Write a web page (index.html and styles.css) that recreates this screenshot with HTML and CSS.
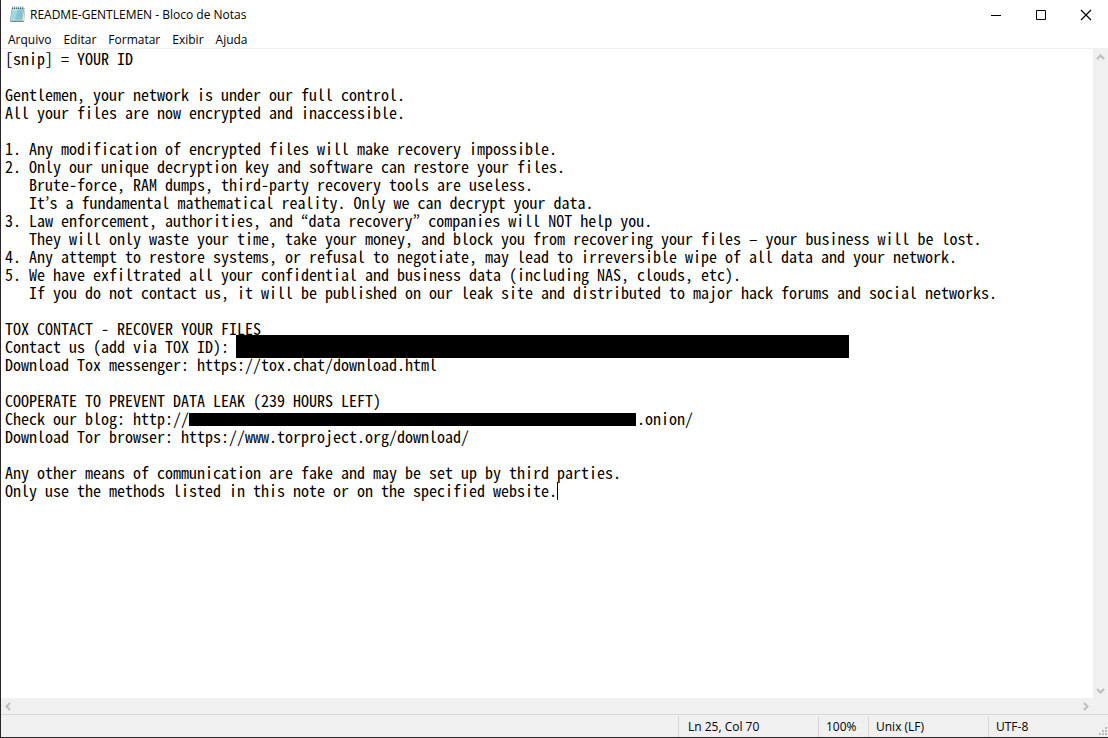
FILE: index.html
```html
<!DOCTYPE html>
<html lang="pt-br">
<head>
    <meta charset="UTF-8">
    <title>README-GENTLEMEN - Bloco de Notas</title>
    <link rel="stylesheet" href="styles.css">
</head>
<body>
    <div class="window">
        <header class="titlebar">
            <svg class="app-icon" width="17" height="17" viewBox="0 0 17 17">
                <path d="M3 2h12l1 1-1 13H2L1 15z" fill="#8d8471"/>
                <path d="M3 2h12l-2 13H1z" fill="#8fcbd9"/>
                <path d="M4 3h5L6 14H2z" fill="#b9e3ea"/>
                <path d="M4 6h9M3 8h10M3 10h10M3 12h9" stroke="#69aebd" stroke-width="1" opacity=".5"/>
                <path d="M15 3l-2 12h2l1-12z" fill="#e6e2d6"/>
                <path d="M3 2h12" stroke="#4c6b73" stroke-width="2" stroke-dasharray="1 1"/>
                <path d="M3 1h12" stroke="#bfc9cb" stroke-width="1"/>
            </svg>
            <h1 class="title">README-GENTLEMEN - Bloco de Notas</h1>
            <div class="window-buttons">
                <button class="window-button" aria-label="Minimizar">
                    <svg width="12" height="12"><path d="M1 6.500h10" stroke="#000"/></svg>
                </button>
                <button class="window-button" aria-label="Maximizar">
                    <svg width="12" height="12"><path d="M1.500 1.500h9v9h-9z" stroke="#000" fill="none"/></svg>
                </button>
                <button class="window-button" aria-label="Fechar">
                    <svg width="12" height="12"><path d="M1 1l10 10M11 1L1 11" stroke="#000" stroke-width="1.200"/></svg>
                </button>
            </div>
        </header>

        <nav class="menu">
            <button class="menu-item">Arquivo</button>
            <button class="menu-item">Editar</button>
            <button class="menu-item">Formatar</button>
            <button class="menu-item">Exibir</button>
            <button class="menu-item">Ajuda</button>
        </nav>

        <main class="editor">
            <div class="page">
                <textarea class="text" aria-label="Texto" wrap="off" spellcheck="false">[snip] = YOUR ID

Gentlemen, your network is under our full control.
All your files are now encrypted and inaccessible.

1. Any modification of encrypted files will make recovery impossible.
2. Only our unique decryption key and software can restore your files.
   Brute-force, RAM dumps, third-party recovery tools are useless.
   It’s a fundamental mathematical reality. Only we can decrypt your data.
3. Law enforcement, authorities, and “data recovery” companies will NOT help you.
   They will only waste your time, take your money, and block you from recovering your files – your business will be lost.
4. Any attempt to restore systems, or refusal to negotiate, may lead to irreversible wipe of all data and your network.
5. We have exfiltrated all your confidential and business data (including NAS, clouds, etc).
   If you do not contact us, it will be published on our leak site and distributed to major hack forums and social networks.

TOX CONTACT - RECOVER YOUR FILES
Contact us (add via TOX ID):
Download Tox messenger: https://tox.chat/download.html

COOPERATE TO PREVENT DATA LEAK (239 HOURS LEFT)
Check our blog: http://                                                        .onion/
Download Tor browser: https://www.torproject.org/download/

Any other means of communication are fake and may be set up by third parties.
Only use the methods listed in this note or on the specified website.</textarea>
                <span class="redacted redacted-id"></span>
                <span class="redacted redacted-host"></span>
                <span class="caret"></span>
            </div>
            <div class="scroll scroll-vertical">
                <button class="arrow" aria-label="Para cima">
                    <svg width="9" height="9"><path d="M1 6l3.500-3.500L8 6" stroke="#bdbdbd" stroke-width="2" fill="none"/></svg>
                </button>
                <button class="arrow" aria-label="Para baixo">
                    <svg width="9" height="9"><path d="M1 3l3.500 3.500L8 3" stroke="#bdbdbd" stroke-width="2" fill="none"/></svg>
                </button>
            </div>
            <div class="scroll scroll-horizontal">
                <button class="arrow" aria-label="Para a esquerda">
                    <svg width="9" height="9"><path d="M6 1L2.500 4.500L6 8" stroke="#bdbdbd" stroke-width="2" fill="none"/></svg>
                </button>
                <button class="arrow" aria-label="Para a direita">
                    <svg width="9" height="9"><path d="M3 1l3.500 3.500L3 8" stroke="#bdbdbd" stroke-width="2" fill="none"/></svg>
                </button>
            </div>
        </main>

        <footer class="status">
            <span class="cell cell-position">Ln 25, Col 70</span>
            <span class="cell cell-zoom">100%</span>
            <span class="cell cell-ending">Unix (LF)</span>
            <span class="cell cell-encoding">UTF-8</span>
            <svg class="grip" width="9" height="9" fill="#bdbdbd">
                <path d="M6 0h2v2h-2zM3 3h2v2h-2zM6 3h2v2h-2zM0 6h2v2h-2zM3 6h2v2h-2zM6 6h2v2h-2z"/>
            </svg>
        </footer>
    </div>
</body>
</html>
```
FILE: styles.css
```css
* {
    box-sizing: border-box;
}

body {
    margin: 0;
    background-color: white;
    color: black;
    font-family: "Open Sans", "Noto Sans", sans-serif;
    font-size: 12px;
    overflow: hidden;
}

button {
    margin: 0;
    padding: 0;
    border: none;
    background-color: transparent;
    color: inherit;
    font: inherit;
}

button:hover {
    background-color: #e5e5e5;
}

svg {
    display: block;
}

.window {
    display: flex;
    flex-direction: column;
    height: 100vh;
    border-left: 1px solid #2a2426;
    border-bottom: 1px solid #2a2426;
}

.titlebar {
    display: flex;
    align-items: center;
    height: 29px;
    padding-left: 8px;
}

.title {
    flex: 1;
    margin: 0 0 0 4px;
    font-size: 12px;
    font-weight: normal;
}

.window-buttons {
    display: flex;
    height: 100%;
}

.window-button {
    display: flex;
    align-items: center;
    justify-content: center;
    width: 45px;
}

.menu {
    display: flex;
    height: 20px;
    padding-left: 1px;
    border-bottom: 1px solid #f0f0f0;
}

.menu-item {
    padding: 2px 6px 0;
}

.editor {
    flex: 1;
    display: grid;
    grid-template-columns: 1fr 15px;
    grid-template-rows: 1fr 16px;
    min-height: 0;
    background-color: #f0f0f0;
}

.page {
    position: relative;
    font-family: "Noto Sans Mono CJK KR", "Liberation Mono", monospace;
    font-size: 16px;
    line-height: 18px;
}

.text {
    display: block;
    width: 100%;
    height: 100%;
    padding: 0 4px;
    border: none;
    outline: none;
    resize: none;
    overflow: hidden;
    background-color: white;
    color: black;
    font: inherit;
}

/* tarjas por cima do texto */
.redacted {
    position: absolute;
    background-color: black;
}

.redacted-id {
    top: 286px;
    left: 235px;
    width: 613px;
    height: 23px;
}

.redacted-host {
    top: 364px;
    left: 188px;
    width: 447px;
    height: 13px;
}

.caret {
    position: absolute;
    top: 433px;
    left: 556px;
    width: 1px;
    height: 18px;
    background-color: black;
}

.scroll {
    display: flex;
    justify-content: space-between;
}

.scroll-vertical {
    flex-direction: column;
}

.scroll-horizontal {
    grid-column: 1;
}

.arrow {
    display: flex;
    align-items: center;
    justify-content: center;
    width: 15px;
    height: 16px;
}

.status {
    display: flex;
    justify-content: flex-end;
    position: relative;
    height: 23px;
    padding-top: 1px;
    border-top: 1px solid #d7d7d7;
    background-color: #f0f0f0;
    line-height: 21px;
}

.cell {
    border-left: 1px solid #d7d7d7;
    padding-left: 7px;
}

.cell-position {
    width: 140px;
    padding-left: 9px;
}

.cell-zoom {
    width: 50px;
}

.cell-ending {
    width: 120px;
}

.cell-encoding {
    width: 120px;
}

.grip {
    position: absolute;
    right: 0;
    bottom: 1px;
}
```
